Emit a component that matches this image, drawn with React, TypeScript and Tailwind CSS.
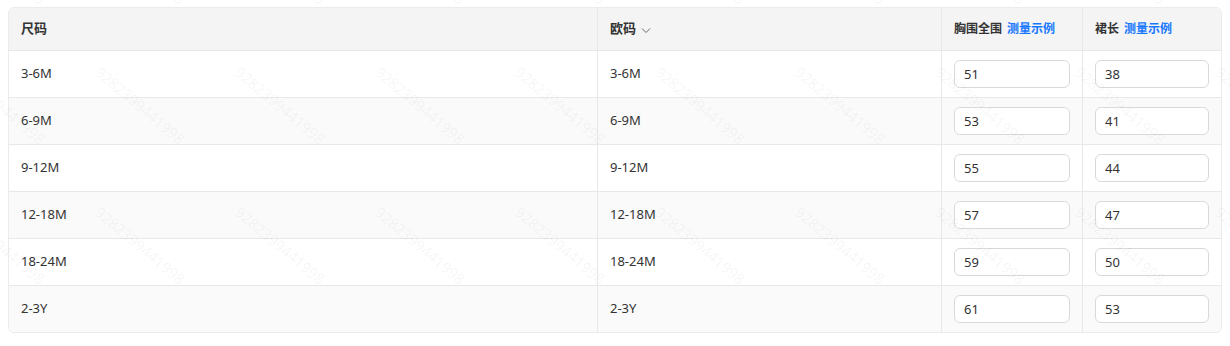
import React from 'react';

const ROWS = [
  { size: '3-6M', eu: '3-6M', chest: '51', length: '38' },
  { size: '6-9M', eu: '6-9M', chest: '53', length: '41' },
  { size: '9-12M', eu: '9-12M', chest: '55', length: '44' },
  { size: '12-18M', eu: '12-18M', chest: '57', length: '47' },
  { size: '18-24M', eu: '18-24M', chest: '59', length: '50' },
  { size: '2-3Y', eu: '2-3Y', chest: '61', length: '53' },
];

const font = { fontFamily: '"Segoe UI", "Noto Sans", "Noto Sans CJK SC", sans-serif' };

// faint repeating watermark laid over the table
const Watermark: React.FC = () => {
  const marks: { x: number; y: number }[] = [];
  for (let j = -1; j <= 2; j++) {
    for (let k = -2; k <= 7; k++) {
      marks.push({ x: 242 + 140 * k, y: 64 + 140 * j });
    }
  }
  return (
    <div aria-hidden className="pointer-events-none absolute inset-0 overflow-hidden">
      {marks.map((m, i) => (
        <span
          key={i}
          className="absolute origin-top-left rotate-[40deg] whitespace-nowrap text-[15px] leading-none text-black/[0.055]"
          style={{ left: m.x, top: m.y, fontFamily: '"Open Sans", sans-serif' }}
        >
          9282399441998
        </span>
      ))}
    </div>
  );
};

const SizeInput: React.FC<{ value: string }> = ({ value }) => (
  <input
    readOnly
    value={value}
    className="h-[28px] w-full rounded-[6px] border border-[#d9d9d9] bg-white px-[9px] text-[13px] text-[#333] outline-none"
    style={font}
  />
);

const App: React.FC = () => {
  return (
    <div className="relative h-[346px] w-[1230px] bg-white px-2 pt-[7px]" style={font}>
      <div className="overflow-hidden rounded-[6px] border border-[#ebebeb] text-[13px] text-[#333]">
        {/* header */}
        <div className="grid h-[42px] grid-cols-[588px_344px_141px_1fr] bg-[#f4f4f4] font-semibold">
          <div className="flex items-center pl-3">尺码</div>
          <div className="flex items-center gap-[5px] border-l border-[#e8e8e8] pl-3">
            欧码
            <svg width="10" height="10" viewBox="0 0 10 10" className="mt-[1px]">
              <path d="M1 3.5 L5 7.5 L9 3.5" fill="none" stroke="#666" strokeWidth="1" />
            </svg>
          </div>
          <div className="flex items-center gap-[5px] border-l border-[#e8e8e8] pl-3 text-[12px]">
            胸围全围 <span className="text-[#1677ff]">测量示例</span>
          </div>
          <div className="flex items-center gap-[5px] border-l border-[#e8e8e8] pl-3 text-[12px]">
            裙长 <span className="text-[#1677ff]">测量示例</span>
          </div>
        </div>

        {/* rows */}
        {ROWS.map((r, i) => (
          <div
            key={r.size}
            className={`grid h-[47px] grid-cols-[588px_344px_141px_1fr] border-t border-[#e8e8e8] ${
              i % 2 === 1 ? 'bg-[#fafafa]' : 'bg-white'
            }`}
          >
            <div className="flex items-center pl-3">{r.size}</div>
            <div className="flex items-center border-l border-[#e8e8e8] pl-3">{r.eu}</div>
            <div className="flex items-center border-l border-[#e8e8e8] px-3">
              <SizeInput value={r.chest} />
            </div>
            <div className="flex items-center border-l border-[#e8e8e8] px-3">
              <SizeInput value={r.length} />
            </div>
          </div>
        ))}
      </div>
      <Watermark />
    </div>
  );
};

export default App;
